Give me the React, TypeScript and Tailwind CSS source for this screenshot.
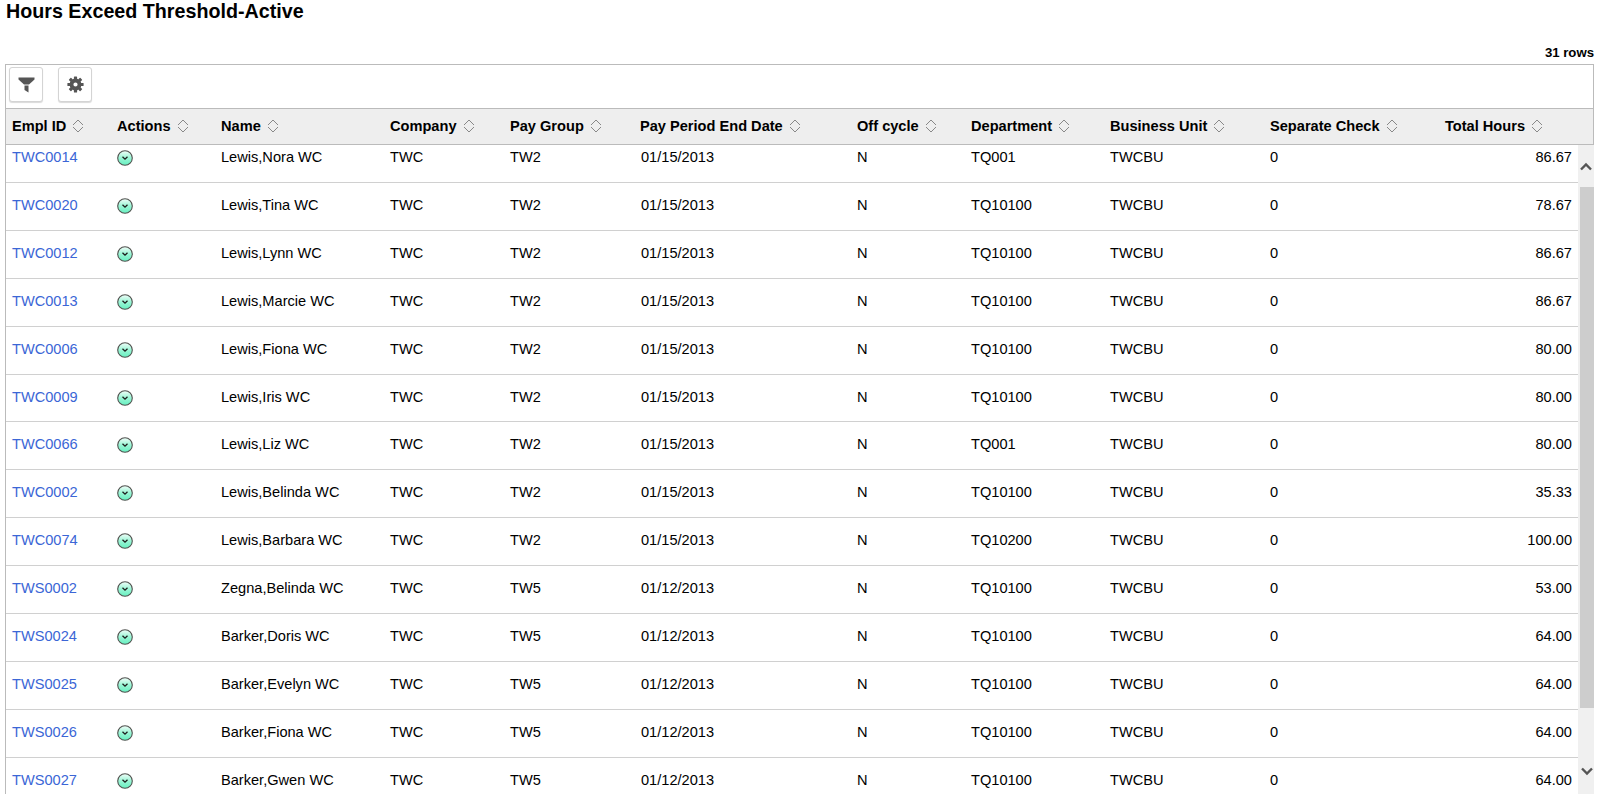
const columns = [
  { label: 'Empl ID', width: 'w-[105px]' },
  { label: 'Actions', width: 'w-[104px]' },
  { label: 'Name', width: 'w-[169px]' },
  { label: 'Company', width: 'w-[120px]' },
  { label: 'Pay Group', width: 'w-[130px]' },
  { label: 'Pay Period End Date', width: 'w-[217px]' },
  { label: 'Off cycle', width: 'w-[114px]' },
  { label: 'Department', width: 'w-[139px]' },
  { label: 'Business Unit', width: 'w-[160px]' },
  { label: 'Separate Check', width: 'w-[175px]' },
  { label: 'Total Hours', width: 'flex-1' },
];

const rows = [
  ['TWC0014', 'Lewis,Nora WC', 'TW2', '01/15/2013', 'TQ001', '86.67'],
  ['TWC0020', 'Lewis,Tina WC', 'TW2', '01/15/2013', 'TQ10100', '78.67'],
  ['TWC0012', 'Lewis,Lynn WC', 'TW2', '01/15/2013', 'TQ10100', '86.67'],
  ['TWC0013', 'Lewis,Marcie WC', 'TW2', '01/15/2013', 'TQ10100', '86.67'],
  ['TWC0006', 'Lewis,Fiona WC', 'TW2', '01/15/2013', 'TQ10100', '80.00'],
  ['TWC0009', 'Lewis,Iris WC', 'TW2', '01/15/2013', 'TQ10100', '80.00'],
  ['TWC0066', 'Lewis,Liz WC', 'TW2', '01/15/2013', 'TQ001', '80.00'],
  ['TWC0002', 'Lewis,Belinda WC', 'TW2', '01/15/2013', 'TQ10100', '35.33'],
  ['TWC0074', 'Lewis,Barbara WC', 'TW2', '01/15/2013', 'TQ10200', '100.00'],
  ['TWS0002', 'Zegna,Belinda WC', 'TW5', '01/12/2013', 'TQ10100', '53.00'],
  ['TWS0024', 'Barker,Doris WC', 'TW5', '01/12/2013', 'TQ10100', '64.00'],
  ['TWS0025', 'Barker,Evelyn WC', 'TW5', '01/12/2013', 'TQ10100', '64.00'],
  ['TWS0026', 'Barker,Fiona WC', 'TW5', '01/12/2013', 'TQ10100', '64.00'],
  ['TWS0027', 'Barker,Gwen WC', 'TW5', '01/12/2013', 'TQ10100', '64.00'],
];

function SortIcon() {
  return (
    <svg width="12" height="14" viewBox="0 0 12 14" fill="none" stroke="#888" strokeWidth="1" className="ml-[6px] shrink-0">
      <path d="M1 6 L6 1 L11 6" />
      <path d="M1 8 L6 13 L11 8" />
    </svg>
  );
}

function ActionIcon() {
  return (
    <svg width="16" height="16" viewBox="0 0 16 16">
      <defs>
        <linearGradient id="act" x1="0" y1="0" x2="0" y2="1">
          <stop offset="0" stopColor="#f2fdf9" />
          <stop offset="0.5" stopColor="#9af5d5" />
          <stop offset="1" stopColor="#66f0c0" />
        </linearGradient>
      </defs>
      <circle cx="8" cy="8" r="7.3" fill="url(#act)" stroke="#50524f" strokeWidth="1.1" />
      <path d="M5.5 6.8 L8 9.2 L10.5 6.8" fill="none" stroke="#1c1c1c" strokeWidth="1.3" />
    </svg>
  );
}

function GearIcon() {
  return (
    <svg width="17" height="17" viewBox="0 0 17 17" fill="#555">
      <path fillRule="evenodd" d="M8.5 2.6 A5.9 5.9 0 1 1 8.5 14.4 A5.9 5.9 0 1 1 8.5 2.6 Z M8.5 6.4 A2.1 2.1 0 1 0 8.5 10.6 A2.1 2.1 0 1 0 8.5 6.4 Z" />
      {[0, 45, 90, 135, 180, 225, 270, 315].map((a) => (
        <rect key={a} x="6.9" y="0.4" width="3.2" height="3" rx="0.6" transform={`rotate(${a} 8.5 8.5)`} />
      ))}
    </svg>
  );
}

export default function App() {
  return (
    <div className="h-[794px] overflow-hidden bg-white flex flex-col text-black font-['Liberation_Sans',Arial,sans-serif]">
      <h1 className="px-[6px] h-[44px] text-[19.7px] leading-[22px] font-bold">Hours Exceed Threshold-Active</h1>
      <div className="h-[20px] pr-[6px] text-right text-[13.2px] leading-[18px] font-bold">31 rows</div>

      <div className="ml-[5px] mr-[6px] flex-1 min-h-0 flex flex-col border-l border-[#bbb]">
        {/* Toolbar */}
        <div className="h-[44px] shrink-0 border-t border-r border-[#bbb] flex items-start pt-[2px] pl-[3px] gap-[15px]">
          <button className="w-[34px] h-[35px] rounded-[3px] border border-[#d4d4d4] bg-white shadow-[0_1px_1px_rgba(0,0,0,0.15)] flex items-center justify-center">
            <svg width="17" height="16" viewBox="0 0 17 16" fill="#555">
              <path d="M0.5 0.5 H16.5 V2.5 L11 7.5 H6 L0.5 2.5 Z" />
              <path d="M6.5 8.5 H10.5 L10.5 15.5 L6.5 13 Z" />
            </svg>
          </button>
          <button className="w-[34px] h-[35px] rounded-[3px] border border-[#d4d4d4] bg-white shadow-[0_1px_1px_rgba(0,0,0,0.15)] flex items-center justify-center">
            <GearIcon />
          </button>
        </div>

        {/* Header */}
        <div className="h-[37px] shrink-0 flex items-center bg-[#eeeeee] border-t border-b border-r border-[#bbb] pl-[6px] text-[14.6px] font-bold">
          {columns.map((c) => (
            <div key={c.label} className={`${c.width} flex items-center`}>
              {c.label}
              <SortIcon />
            </div>
          ))}
        </div>

        {/* Body */}
        <div className="flex-1 min-h-0 flex overflow-hidden">
          <div className="flex-1 min-w-0 mt-[-10px]">
            {rows.map((r) => (
              <div key={r[0]} className="h-[47.92px] shrink-0 flex items-start pt-[13px] pl-[6px] pr-[6px] border-b border-[#d0d0d0] text-[14.6px] leading-[18px]">
                <div className="w-[105px] text-[#3b66d6]">{r[0]}</div>
                <div className="w-[104px] pt-[2px]"><ActionIcon /></div>
                <div className="w-[169px]">{r[1]}</div>
                <div className="w-[120px]">TWC</div>
                <div className="w-[130px]">{r[2]}</div>
                <div className="w-[217px] pl-[1px]">{r[3]}</div>
                <div className="w-[114px]">N</div>
                <div className="w-[139px]">{r[4]}</div>
                <div className="w-[160px]">TWCBU</div>
                <div className="w-[175px]">0</div>
                <div className="flex-1 text-right">{r[5]}</div>
              </div>
            ))}
          </div>

          {/* Scrollbar */}
          <div className="w-[16px] shrink-0 bg-[#f0f0f0] flex flex-col items-center relative">
            <svg width="14" height="9" viewBox="0 0 14 9" fill="none" stroke="#555" strokeWidth="2.4" className="mt-[17px]">
              <path d="M2 7.5 L7 2.5 L12 7.5" />
            </svg>
            <div className="absolute top-[42px] left-[2px] right-0 h-[521px] bg-[#cdcdcd]" />
            <svg width="14" height="9" viewBox="0 0 14 9" fill="none" stroke="#555" strokeWidth="2.4" className="absolute top-[622px] left-[2px]">
              <path d="M2 1.5 L7 6.5 L12 1.5" />
            </svg>
          </div>
        </div>
      </div>
    </div>
  );
}
